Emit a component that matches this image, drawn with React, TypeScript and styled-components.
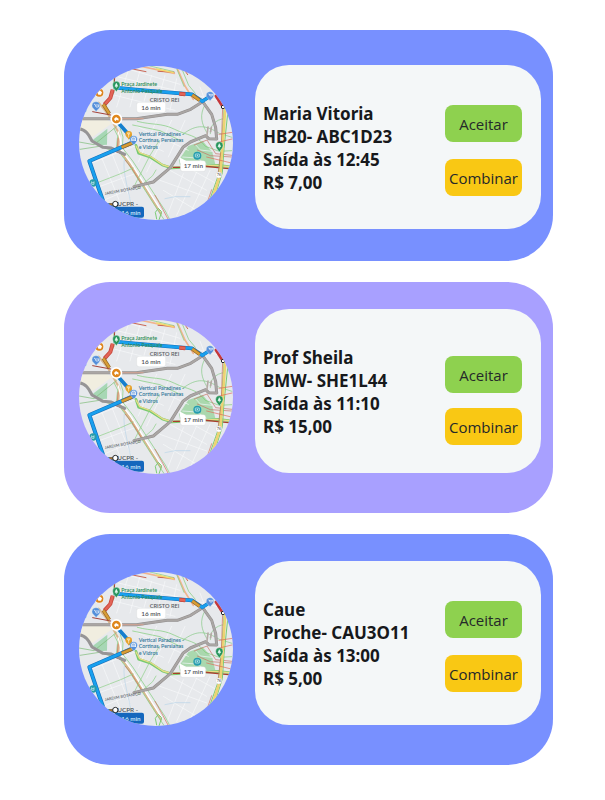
import React from "react";
import styled, { createGlobalStyle } from "styled-components";

const GlobalStyle = createGlobalStyle`
  * { box-sizing: border-box; }
  body {
    margin: 0;
    background: #ffffff;
    color: #17191c;
    font-family: "Noto Sans", "Open Sans", sans-serif;
  }
`;

const RideList = styled.main`
  display: flex;
  flex-direction: column;
  gap: 21px;
  padding: 30px 52px 36px 64px;
`;

const Card = styled.article<{ $tone: string; $lowered: boolean }>`
  display: flex;
  align-items: flex-start;
  gap: 22px;
  min-height: 231px;
  padding: ${(p) => (p.$lowered ? "35px 12px 31px 15px" : "27px 12px 39px 15px")};
  border-radius: 46px;
  background: ${(p) => p.$tone};
`;

const MapFrame = styled.div<{ $drop: number }>`
  flex: none;
  width: 154px;
  height: 154px;
  margin-top: ${(p) => p.$drop}px;
  border-radius: 50%;
  overflow: hidden;

  svg {
    display: block;
    width: 100%;
    height: 100%;
  }
`;

const Panel = styled.div`
  flex: 1;
  display: flex;
  align-items: center;
  justify-content: space-between;
  min-height: 164px;
  padding: 2px 19px 0 8px;
  border-radius: 34px;
  background: #f4f7f8;
`;

const Details = styled.div`
  font-size: 17px;
  font-weight: 700;
  line-height: 23px;
`;

const Name = styled.h2`
  margin: 0;
  font-size: inherit;
  line-height: inherit;
`;

const Line = styled.p`
  margin: 0;
`;

const Actions = styled.div<{ $compact: boolean }>`
  display: flex;
  flex-direction: column;
  gap: ${(p) => (p.$compact ? 15 : 17)}px;
  margin-top: ${(p) => (p.$compact ? 16 : 4)}px;
`;

const ActionButton = styled.button<{ $tone: string }>`
  display: flex;
  align-items: center;
  justify-content: center;
  width: 77px;
  height: 37px;
  padding: 2px 0 0;
  border: 0;
  border-radius: 8px;
  background: ${(p) => p.$tone};
  color: #25292a;
  font: 400 15px/20px "Open Sans", "Noto Sans", sans-serif;
  cursor: pointer;
`;

const TrafficLines = () => (
  <g fill="none" strokeLinecap="round" strokeLinejoin="round">
    <g stroke="#f7f9fa" strokeWidth="2">
      <path d="M235 150l-35 110M270 150l-30 110M305 165l-25 85M345 165l-30 110M380 175l-20 95M205 170l180 42M195 225l180 45M220 142l170 50" />
      <path d="M320 300l-55 125M365 300l-75 155M405 300l-50 110M255 315l160 75M230 345l110 48M450 200l60 160M400 215l120 30" />
      <path d="M150 400l70 170M180 385l80 200M120 430l140-55M145 500l110-40M160 540l120-50M330 480l140 50M360 450l110 60M400 460l-50 130M440 455l-60 130M480 450l-60 130M340 510l100 60M410 440l90 50" />
    </g>
    <path d="M225 410c-10 30 5 80 18 140M345 535l30-6h45" stroke="#b9d5e9" strokeWidth="2" />
    <path d="M268 137l105 22M380 140l25 57 25 40" stroke="#f0b48f" strokeWidth="5" />
    <path d="M300 137l72 17M378 140l24 58M392 137l24 58 20 24" stroke="#7bcb75" strokeWidth="2" />
    <path d="M248 146l40 8M324 153l48 3M398 141l15 22" stroke="#c96756" strokeWidth="3" />
    <path d="M320 146l50 11" stroke="#f4d96c" strokeWidth="4" />
    <path d="M146 247l26 32 22 37 14 25-4 44 34 44 95 151" stroke="#d9b88f" strokeWidth="6" />
    <path d="M192 325l11 22-4 38 34 43 90 141 20 30M211 325l8 25-2 32 31 40 98 150 14 27" stroke="#7bcb75" strokeWidth="2" />
    <path d="M205 335l8 33-3 16 34 45 92 146" stroke="#fff" strokeWidth="4" />
    <path d="M204 355l-3 38M226 420l20 25 31 50M315 525l24 43 15 28" stroke="#d66755" strokeWidth="2" />
    <path d="M258 375l8 24 36 12 35 23 28 9 138-8 46 5" stroke="#78ca70" strokeWidth="8" />
    <path d="M258 377l11 20 35 13 35 24 27 8 135-7 45 5" stroke="#e9dc88" strokeWidth="4" />
    <path d="M370 441h50M456 437l80 8" stroke="#a83e2d" strokeWidth="4" />
    <path d="M262 303c44 12 72 4 112 24s63 14 92 51l42 15 37-2M248 314l82 17 62 30" stroke="#7bcb75" strokeWidth="2" />
    <path d="M398 342c45-34 71-26 110-3l38 12M470 336c-14-25-24-50-4-85M481 340c-3-22 15-43 42-45" stroke="#84c984" strokeWidth="2" />
    <path d="M433 374l38-15 26 41 49 5M442 389l39 17 64 4" stroke="#c47062" strokeWidth="2" />
    <path d="M523 258l-9 125-9 82-27 77-29 45M534 270l-12 115-5 72-24 77-26 40" stroke="#77ca76" strokeWidth="3" />
    <path d="M526 260l-9 125-6 75-26 82-24 37" stroke="#edd373" strokeWidth="8" />
    <path d="M518 260l-4 116M512 397l-8 66M485 508l-15 44" stroke="#cf6d54" strokeWidth="2" />
    <path d="M507 342l40-6M503 366l43-10M470 410l74 18" stroke="#e06655" strokeWidth="2" />
    <path d="M122 495l90-35 38-17M254 495l45-88 29-47M263 505l45-39 10-17" stroke="#8bce83" strokeWidth="2" />
    <path d="M191 142l1 75-27 42M87 365l45 8 67-54M90 387l58-9 35 11" stroke="#78b972" strokeWidth="2" />
    <path d="M196 140l-3 49M128 274l54 10M188 390l36 14" stroke="#a44139" strokeWidth="3" />
    <path d="M320 596l-4-20 9-12 10 10-8 25" stroke="#7bcb75" strokeWidth="3" />
  </g>
);

const Label = ({
  x,
  y,
  size = 14,
  color = "#31769a",
  children,
}: {
  x: number;
  y: number;
  size?: number;
  color?: string;
  children: React.ReactNode;
}) => (
  <text x={x} y={y} fontSize={size} fill={color} fontFamily="Lato, sans-serif" fontWeight="600">
    {children}
  </text>
);

const Pin = ({ x, y, color }: { x: number; y: number; color: string }) => (
  <g transform={`translate(${x} ${y})`}>
    <path d="M0 19C-3 11-11 8-11-2a11 11 0 0 1 22 0C11 8 3 11 0 19Z" fill={color} stroke="#fff" strokeWidth="1" />
    <path d="M-4 2h8L0-7ZM0 2v5" fill="#e5fbf3" stroke="#e5fbf3" strokeWidth="2" />
  </g>
);

const RouteMap = () => (
  <svg viewBox="87 137 462 462" role="img" aria-label="Mapa da rota">
    <rect x="87" y="137" width="462" height="462" fill="#e7e9ec" />
    <path d="M87 302l62-12 39 17-60 43-41-23Z" fill="#f1eee0" />
    <path d="M128 359l44-34-1 48-23 2Z" fill="#a7d7b5" />
    <path d="M387 419l28-42 43-15 29 34 9 36-106 3Z" fill="#aad8ae" />
    <path d="M432 368l19 21 35 4M397 410l43 3 31 20" fill="none" stroke="#dbede2" strokeWidth="3" />
    <TrafficLines />

    <g fill="none" strokeLinejoin="round" strokeLinecap="round">
      <path d="M87 295h172l93-13h30l40-15 36-23 27 38 12 40 3 34-24-1-9-9-46 19-22 16-38 61-51 43-58 14" stroke="#918e8e" strokeWidth="9" />
      <path d="M87 295h172l93-13h30l40-15 36-23 27 38 12 40 3 34-24-1-9-9-46 19-22 16-38 61-51 43-58 14" stroke="#aaa6a4" strokeWidth="6" />
      <path d="M87 325c23 3 31 22 39 37l33 19 25 2 40 19" stroke="#969596" strokeWidth="9" />
      <path d="M216 295l43 0 20 0" stroke="#c9a193" strokeWidth="4" />
      <path d="M471 344l3-24M482 334l2-13" stroke="#b5aaa5" strokeWidth="5" />
      <path d="M248 366l-130 56 30 88 11 31 0 12 40 1" stroke="#1770ba" strokeWidth="12" />
      <path d="M248 366l-130 56 30 88 11 31 0 12" stroke="#18a0ef" strokeWidth="8" />
      <path d="M196 202l62 6 168 14 31 21 23-15" stroke="#1770ba" strokeWidth="11" />
      <path d="M196 202l62 6 168 14 31 21 23-15" stroke="#18a0ef" strokeWidth="8" />
      <path d="M208 311l31 35 12 20" stroke="#157fce" strokeWidth="11" />
      <path d="M388 220l18 2M188 208l-7 25-18 20" stroke="#c8483c" strokeWidth="12" strokeLinecap="butt" />
      <path d="M388 220l18 2M188 208l-7 25-18 20" stroke="#e26458" strokeWidth="7" strokeLinecap="butt" />
      <path d="M427 224l22 16M160 252l18 28M215 381l31-13" stroke="#946526" strokeWidth="11" strokeLinecap="butt" />
      <path d="M427 224l22 16M160 252l18 28M215 381l31-13" stroke="#d89d35" strokeWidth="7" strokeLinecap="butt" />
      <path d="M498 227l20 31" stroke="#c4373b" strokeWidth="9" />
      <path d="M180 552h18" stroke="#ad722e" strokeWidth="7" />
    </g>

    <Label x={214} y={197} size={16} color="#298a52">Praça Jardinete</Label>
    <Label x={214} y={217} size={16} color="#298a52">Antonio Pasquale</Label>
    <Label x={299} y={245} size={17} color="#5b5f64">CRISTO REI</Label>
    <Label x={266} y={347} size={16}>Vertical Paradines -</Label>
    <Label x={266} y={366} size={16}>Cortinas, Persianas</Label>
    <Label x={266} y={386} size={16}>e Vidros</Label>
    <g transform="rotate(-10 165 524)">
      <Label x={165} y={524} size={12} color="#666b70">JARDIM BOTÂNICO</Label>
    </g>
    <Label x={202} y={556} size={19} color="#52565a">UCPR -</Label>
    <Label x={100} y={276} size={20} color="#3274af">s</Label>

    <Pin x={199} y={196} color="#26945b" />
    <Pin x={508} y={377} color="#26945b" />
    <g fill="#548fda" stroke="#d9eefc" strokeWidth="1">
      <path d="M138 274c-3-8-12-10-12-18a12 12 0 0 1 24 0c0 8-8 11-12 18ZM480 242c-3-7-11-9-11-17a11 11 0 0 1 22 0c0 8-7 10-11 17ZM251 373c-3-5-11-8-11-16a11 11 0 0 1 22 0c0 8-7 11-11 16Z" />
    </g>
    <g fill="none" stroke="#fff" strokeWidth="2">
      <path d="M132 252h3l3 8h7l2-6h-10M475 221h3l2 6h6l2-5h-9" />
      <rect x="245" y="353" width="12" height="8" />
      <path d="M248 353v-3h6v3M245 357h12" />
    </g>
    <circle cx="148" cy="217" r="15" fill="#f2efe8" />
    <circle cx="148" cy="217" r="12" fill="#dc841e" />
    <path d="M142 216l7-6 7 6-3 7h-8Z" fill="#fff" />
    <circle cx="199" cy="296" r="18" fill="#fff" />
    <circle cx="199" cy="296" r="13" fill="#df861c" />
    <path d="M192 296l6-6 8 5-1 6-5-3-4 5Z" fill="#fff" />
    <path d="M236 358c-3-7-10-9-10-16a10 10 0 0 1 20 0c0 8-7 9-10 16Z" fill="#e6a12a" />
    <path d="M233 336v5q3 3 6 0v-5M236 336v15" fill="none" stroke="#fff4d5" strokeWidth="2" />
    <circle cx="442" cy="406" r="12" fill="#259cae" />
    <rect x="436" y="401" width="12" height="9" rx="1" fill="none" stroke="#e3f6f6" strokeWidth="2" />
    <circle cx="442" cy="405" r="2" fill="#e3f6f6" />
    <circle cx="129" cy="488" r="11" fill="#269bab" />
    <path d="M125 483v9h7v-9M125 487h7" fill="none" stroke="#d7f3f1" strokeWidth="2" />
    <circle cx="506" cy="464" r="9" fill="#fff" stroke="#c9c9c7" strokeWidth="1" />
    <Label x={501} y={468} size={10} color="#55585a">76</Label>
    <circle cx="519" cy="260" r="5" fill="#fff" stroke="#24272b" strokeWidth="3" />

    <path d="M267 246h73q7 0 7 7v17q0 7-7 7h-73q-7 0-7-7v-17q0-7 7-7Z" fill="#fff" stroke="#d1d3d4" strokeWidth="1" />
    <path d="M332 246l14 1-1 10Z" fill="#fff" />
    <Label x={274} y={268} size={19} color="#4d5054">16 min</Label>
    <path d="M398 421h62q7 0 7 7v18q0 7-7 7h-62q-7 0-7-7v-18q0-7 7-7Z" fill="#fff" stroke="#d1d3d4" strokeWidth="1" />
    <path d="M391 429l-3-18 21 11Z" fill="#fff" />
    <Label x={401} y={443} size={19} color="#4d5054">17 min</Label>
    <path d="M194 559h82q6 0 6 6v21q0 6-6 6h-88Z" fill="#1467bd" />
    <Label x={214} y={584} size={19} color="#d5eaff">16 min</Label>
    <circle cx="196" cy="551" r="8" fill="#fff" stroke="#282b2e" strokeWidth="3" />
  </svg>
);

const BLUE = "#7890ff";
const LILAC = "#a8a0ff";

const rides = [
  { name: "Maria Vitoria", car: "HB20- ABC1D23", time: "12:45", price: "7,00", tone: BLUE, lowered: true, drop: 1, compact: false },
  { name: "Prof Sheila", car: "BMW- SHE1L44", time: "11:10", price: "15,00", tone: LILAC, lowered: false, drop: 11, compact: true },
  { name: "Caue", car: "Proche- CAU3O11", time: "13:00", price: "5,00", tone: BLUE, lowered: false, drop: 11, compact: false },
];

export default function App() {
  return (
    <>
      <GlobalStyle />
      <RideList>
        {rides.map((ride) => (
          <Card key={ride.name} $tone={ride.tone} $lowered={ride.lowered}>
            <MapFrame $drop={ride.drop}>
              <RouteMap />
            </MapFrame>
            <Panel>
              <Details>
                <Name>{ride.name}</Name>
                <Line>{ride.car}</Line>
                <Line>Saída às {ride.time}</Line>
                <Line>R$ {ride.price}</Line>
              </Details>
              <Actions $compact={ride.compact}>
                <ActionButton type="button" $tone="#8ed14f">Aceitar</ActionButton>
                <ActionButton type="button" $tone="#f9c814">Combinar</ActionButton>
              </Actions>
            </Panel>
          </Card>
        ))}
      </RideList>
    </>
  );
}
